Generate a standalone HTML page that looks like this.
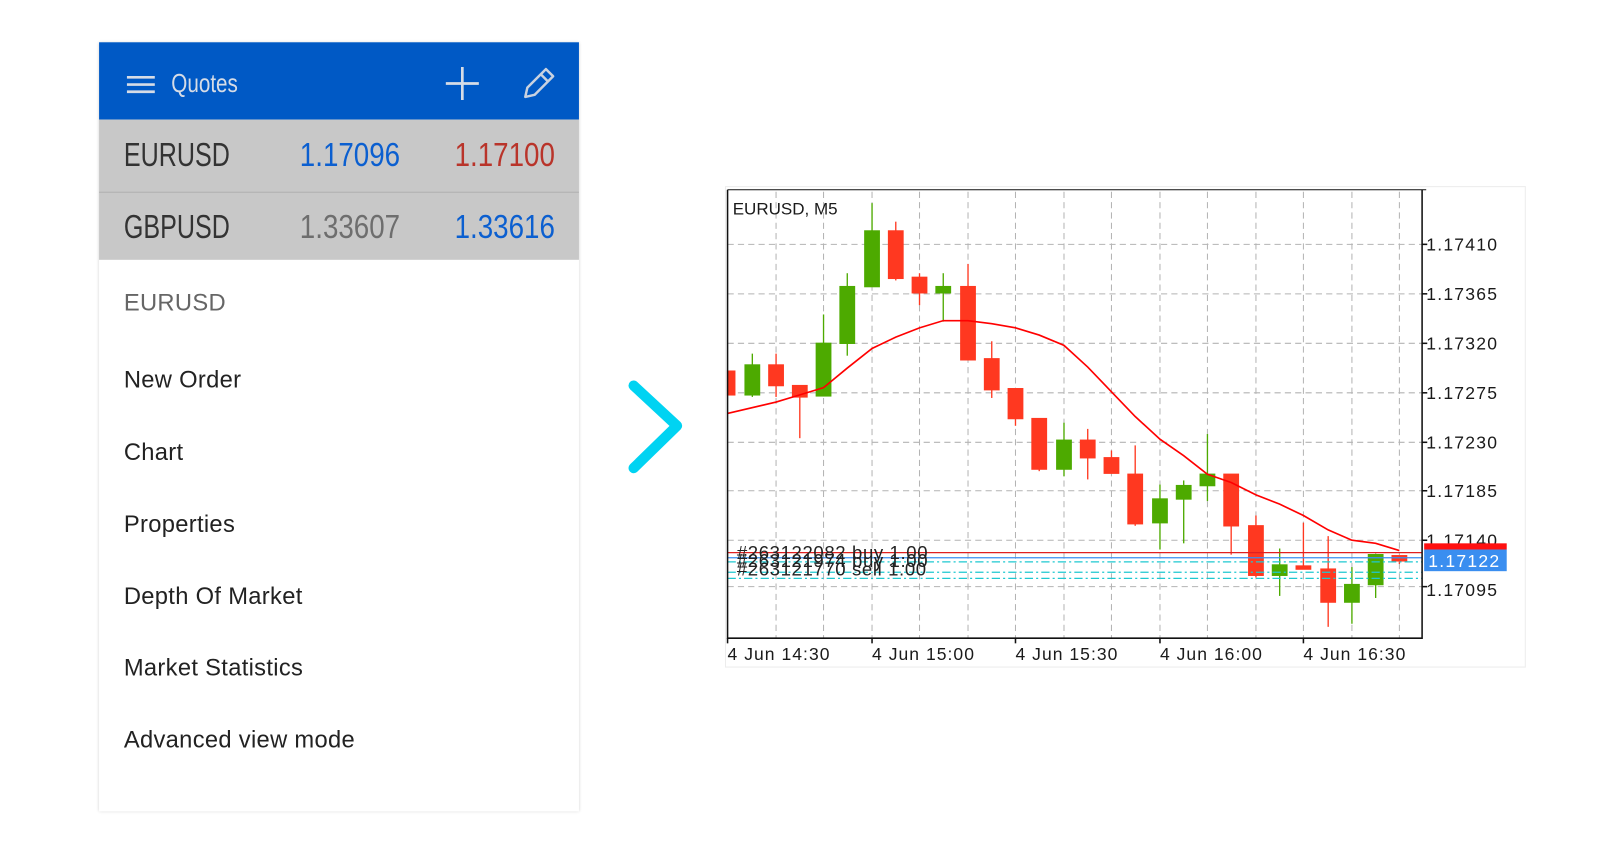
<!DOCTYPE html>
<html><head><meta charset="utf-8"><style>
html,body{margin:0;padding:0;background:#fff;width:1618px;height:855px;overflow:hidden}
#w{position:absolute;left:0;top:0;width:1560px;height:824px;transform-origin:0 0;transform:scale(1.032,1.031);font-family:"Liberation Sans",sans-serif}
.panel{position:absolute;left:96px;top:41px;width:465px;height:746px;background:#fff;box-shadow:0 0 3px rgba(0,0,0,.18)}
.hdr{position:absolute;left:0;top:0;width:465px;height:75px;background:#0059c5}
.row{position:absolute;left:0;width:465px;background:#c8c8c8}
.t{position:absolute;white-space:nowrap;transform-origin:0 50%}
.sym{left:24px;font-size:32px;color:#333;transform:scaleX(.76)}
.v{font-size:32px;transform:scaleX(.84);transform-origin:100% 50%}
.mi{position:absolute;left:24px;font-size:23px;color:#222;letter-spacing:0.3px}
</style></head><body><div id="w">
<div class="panel">
 <div class="hdr">
  <svg style="position:absolute;left:0;top:0" width="465" height="75">
   <g stroke="#d6dce6" stroke-width="2.6"><line x1="27" y1="34" x2="54" y2="34"/><line x1="27" y1="41" x2="54" y2="41"/><line x1="27" y1="48" x2="54" y2="48"/>
   <line x1="336" y1="40" x2="368" y2="40"/><line x1="352" y1="24" x2="352" y2="56"/></g>
   <g fill="none" stroke="#c9d2e0" stroke-width="2.4" stroke-linejoin="round"><path d="M413 53 L415 44 L433 26 L440 33 L422 51 Z M428 31 L435 38"/></g>
  </svg>
  <div class="t" style="left:70px;top:26px;font-size:25px;color:#d6dce6;transform:scaleX(.8)">Quotes</div>
 </div>
 <div class="row" style="top:75px;height:70px;border-bottom:1px solid #aaa">
  <div class="t sym" style="top:16px">EURUSD</div>
  <div class="t v" style="right:173px;top:16px;color:#0b5fd0">1.17096</div>
  <div class="t v" style="right:23px;top:16px;color:#b9342a">1.17100</div>
 </div>
 <div class="row" style="top:146px;height:65px">
  <div class="t sym" style="top:15px">GBPUSD</div>
  <div class="t v" style="right:173px;top:15px;color:#6e6e6e">1.33607</div>
  <div class="t v" style="right:23px;top:15px;color:#0b5fd0">1.33616</div>
 </div>
 <div class="mi" style="top:239px;color:#666">EURUSD</div>
 <div class="mi" style="top:314px">New Order</div>
 <div class="mi" style="top:384px">Chart</div>
 <div class="mi" style="top:454px">Properties</div>
 <div class="mi" style="top:524px">Depth Of Market</div>
 <div class="mi" style="top:593px">Market Statistics</div>
 <div class="mi" style="top:663px">Advanced view mode</div>
</div>
<svg style="position:absolute;left:0;top:0" width="1560" height="824">
 <path d="M614 374 L656 413 L614 454" fill="none" stroke="#00d3f2" stroke-width="10" stroke-linecap="round" stroke-linejoin="round"/>
 <rect x="703" y="181" width="775" height="466" fill="#fff" stroke="#ececec" stroke-width="1"/>
 <g stroke="#b4b4b4" stroke-width="1" stroke-dasharray="6,4">
  <line x1="705" x2="1378" y1="237" y2="237"/><line x1="705" x2="1378" y1="285" y2="285"/><line x1="705" x2="1378" y1="333" y2="333"/><line x1="705" x2="1378" y1="381" y2="381"/><line x1="705" x2="1378" y1="429" y2="429"/><line x1="705" x2="1378" y1="476" y2="476"/><line x1="705" x2="1378" y1="524" y2="524"/><line x1="705" x2="1378" y1="569" y2="569"/>
  <line y1="186" y2="619" x1="752" x2="752"/><line y1="186" y2="619" x1="798" x2="798"/><line y1="186" y2="619" x1="845" x2="845"/><line y1="186" y2="619" x1="891" x2="891"/><line y1="186" y2="619" x1="938" x2="938"/><line y1="186" y2="619" x1="984" x2="984"/><line y1="186" y2="619" x1="1031" x2="1031"/><line y1="186" y2="619" x1="1077" x2="1077"/><line y1="186" y2="619" x1="1124" x2="1124"/><line y1="186" y2="619" x1="1170" x2="1170"/><line y1="186" y2="619" x1="1217" x2="1217"/><line y1="186" y2="619" x1="1263" x2="1263"/><line y1="186" y2="619" x1="1310" x2="1310"/><line y1="186" y2="619" x1="1356" x2="1356"/>
 </g>
 <g stroke-width="1.3">
 <g stroke="#4daa00" fill="#4daa00">
  <line x1="729" x2="729" y1="343" y2="385"/><rect x="722" y="354" width="14" height="29"/>
  <line x1="798" x2="798" y1="305" y2="384"/><rect x="791" y="333" width="14" height="51"/>
  <line x1="821" x2="821" y1="265" y2="345"/><rect x="814" y="278" width="14" height="55"/>
  <line x1="845" x2="845" y1="197" y2="278"/><rect x="838" y="224" width="14" height="54"/>
  <line x1="914" x2="914" y1="265" y2="312"/><rect x="907" y="278" width="14" height="6"/>
  <line x1="1031" x2="1031" y1="410" y2="462"/><rect x="1024" y="427" width="14" height="28"/>
  <line x1="1124" x2="1124" y1="470" y2="533"/><rect x="1117" y="484" width="14" height="23"/>
  <line x1="1147" x2="1147" y1="466" y2="527"/><rect x="1140" y="471" width="14" height="13"/>
  <line x1="1170" x2="1170" y1="421" y2="486"/><rect x="1163" y="460" width="14" height="11"/>
  <line x1="1240" x2="1240" y1="532" y2="578"/><rect x="1233" y="548" width="14" height="10"/>
  <line x1="1310" x2="1310" y1="550" y2="605"/><rect x="1303" y="567" width="14" height="17"/>
  <line x1="1333" x2="1333" y1="537" y2="580"/><rect x="1326" y="538" width="14" height="29"/>
 </g>
 <g stroke="#ff3820" fill="#ff3820">
  <rect x="705" y="360" width="7" height="23"/>
  <line x1="752" x2="752" y1="343" y2="385"/><rect x="745" y="354" width="14" height="20"/>
  <line x1="775" x2="775" y1="374" y2="425"/><rect x="768" y="374" width="14" height="11"/>
  <line x1="868" x2="868" y1="215" y2="272"/><rect x="861" y="224" width="14" height="46"/>
  <line x1="891" x2="891" y1="265" y2="296"/><rect x="884" y="269" width="14" height="15"/>
  <line x1="938" x2="938" y1="256" y2="349"/><rect x="931" y="278" width="14" height="71"/>
  <line x1="961" x2="961" y1="331" y2="386"/><rect x="954" y="348" width="14" height="30"/>
  <line x1="984" x2="984" y1="377" y2="413"/><rect x="977" y="377" width="14" height="29"/>
  <line x1="1007" x2="1007" y1="406" y2="457"/><rect x="1000" y="406" width="14" height="49"/>
  <line x1="1054" x2="1054" y1="416" y2="465"/><rect x="1047" y="427" width="14" height="17"/>
  <line x1="1077" x2="1077" y1="437" y2="459"/><rect x="1070" y="444" width="14" height="15"/>
  <line x1="1100" x2="1100" y1="432" y2="510"/><rect x="1093" y="460" width="14" height="48"/>
  <line x1="1193" x2="1193" y1="460" y2="538"/><rect x="1186" y="460" width="14" height="50"/>
  <line x1="1217" x2="1217" y1="500" y2="560"/><rect x="1210" y="510" width="14" height="48"/>
  <line x1="1263" x2="1263" y1="507" y2="552"/><rect x="1256" y="549" width="14" height="3"/>
  <line x1="1287" x2="1287" y1="520" y2="608"/><rect x="1280" y="552" width="14" height="32"/>
  <line x1="1356" x2="1356" y1="539" y2="547"/><rect x="1349" y="539" width="14" height="5"/>
 </g></g>
 <polyline fill="none" stroke="#ff0000" stroke-width="1.6" points="705,401 752,390 775,383 798,376 821,357 845,338 868,327 891,318 914,311 938,311 961,314 984,318 1007,325 1031,335 1054,356 1077,380 1100,404 1124,426 1147,442 1170,460 1193,468 1217,480 1240,489 1263,500 1287,514 1310,524 1333,527 1356,534"/>
 <line x1="705" x2="1378" y1="536" y2="536" stroke="#e02020" stroke-width="1.2"/>
 <line x1="705" x2="1378" y1="541" y2="541" stroke="#3a8ef0" stroke-width="1.2"/>
 <g stroke="#1ec8d0" stroke-width="1.2" stroke-dasharray="8,3,2,3"><line x1="705" x2="1378" y1="545" y2="545"/><line x1="705" x2="1378" y1="555" y2="555"/><line x1="705" x2="1378" y1="561" y2="561"/></g>
 <g font-family="Liberation Sans,sans-serif" font-size="18" fill="#222" letter-spacing="0.6">
  <text x="714" y="542">#263122082 buy 1.00</text>
  <text x="714" y="550">#263121974 buy 1.00</text>
  <text x="714" y="558">#263121770 sell 1.00</text>
 </g>
 <path d="M705 184 V619 H1378 V184" fill="none" stroke="#111" stroke-width="1.5"/>
 <line x1="705" x2="1382" y1="184" y2="184" stroke="#111" stroke-width="1"/>
 <g stroke="#111" stroke-width="1.5">
  <line x1="1378" x2="1383" y1="237" y2="237"/><line x1="1378" x2="1383" y1="285" y2="285"/><line x1="1378" x2="1383" y1="333" y2="333"/><line x1="1378" x2="1383" y1="381" y2="381"/><line x1="1378" x2="1383" y1="429" y2="429"/><line x1="1378" x2="1383" y1="476" y2="476"/><line x1="1378" x2="1383" y1="524" y2="524"/><line x1="1378" x2="1383" y1="569" y2="569"/>
  <line x1="705" x2="705" y1="619" y2="624"/><line x1="845" x2="845" y1="619" y2="624"/><line x1="984" x2="984" y1="619" y2="624"/><line x1="1124" x2="1124" y1="619" y2="624"/><line x1="1263" x2="1263" y1="619" y2="624"/>
 </g>
 <g font-family="Liberation Sans,sans-serif" font-size="17" fill="#1a1a1a" letter-spacing="1.2">
  <text x="710" y="208" letter-spacing="0" font-size="16.5">EURUSD, M5</text>
  <text x="1382" y="243">1.17410</text><text x="1382" y="291">1.17365</text><text x="1382" y="339">1.17320</text><text x="1382" y="387">1.17275</text><text x="1382" y="435">1.17230</text><text x="1382" y="482">1.17185</text><text x="1382" y="530">1.17140</text><text x="1382" y="578">1.17095</text>
  <text x="705" y="640" letter-spacing="1">4 Jun 14:30</text><text x="845" y="640" letter-spacing="1">4 Jun 15:00</text><text x="984" y="640" letter-spacing="1">4 Jun 15:30</text><text x="1124" y="640" letter-spacing="1">4 Jun 16:00</text><text x="1263" y="640" letter-spacing="1">4 Jun 16:30</text>
 </g>
 <rect x="1380" y="527" width="80" height="6" fill="#ff1010"/>
 <rect x="1380" y="533" width="80" height="21" fill="#3a8ef0"/>
 <text x="1384" y="550" font-family="Liberation Sans,sans-serif" font-size="17" fill="#fff" letter-spacing="1.2">1.17122</text>
</svg>
</div></body></html>
